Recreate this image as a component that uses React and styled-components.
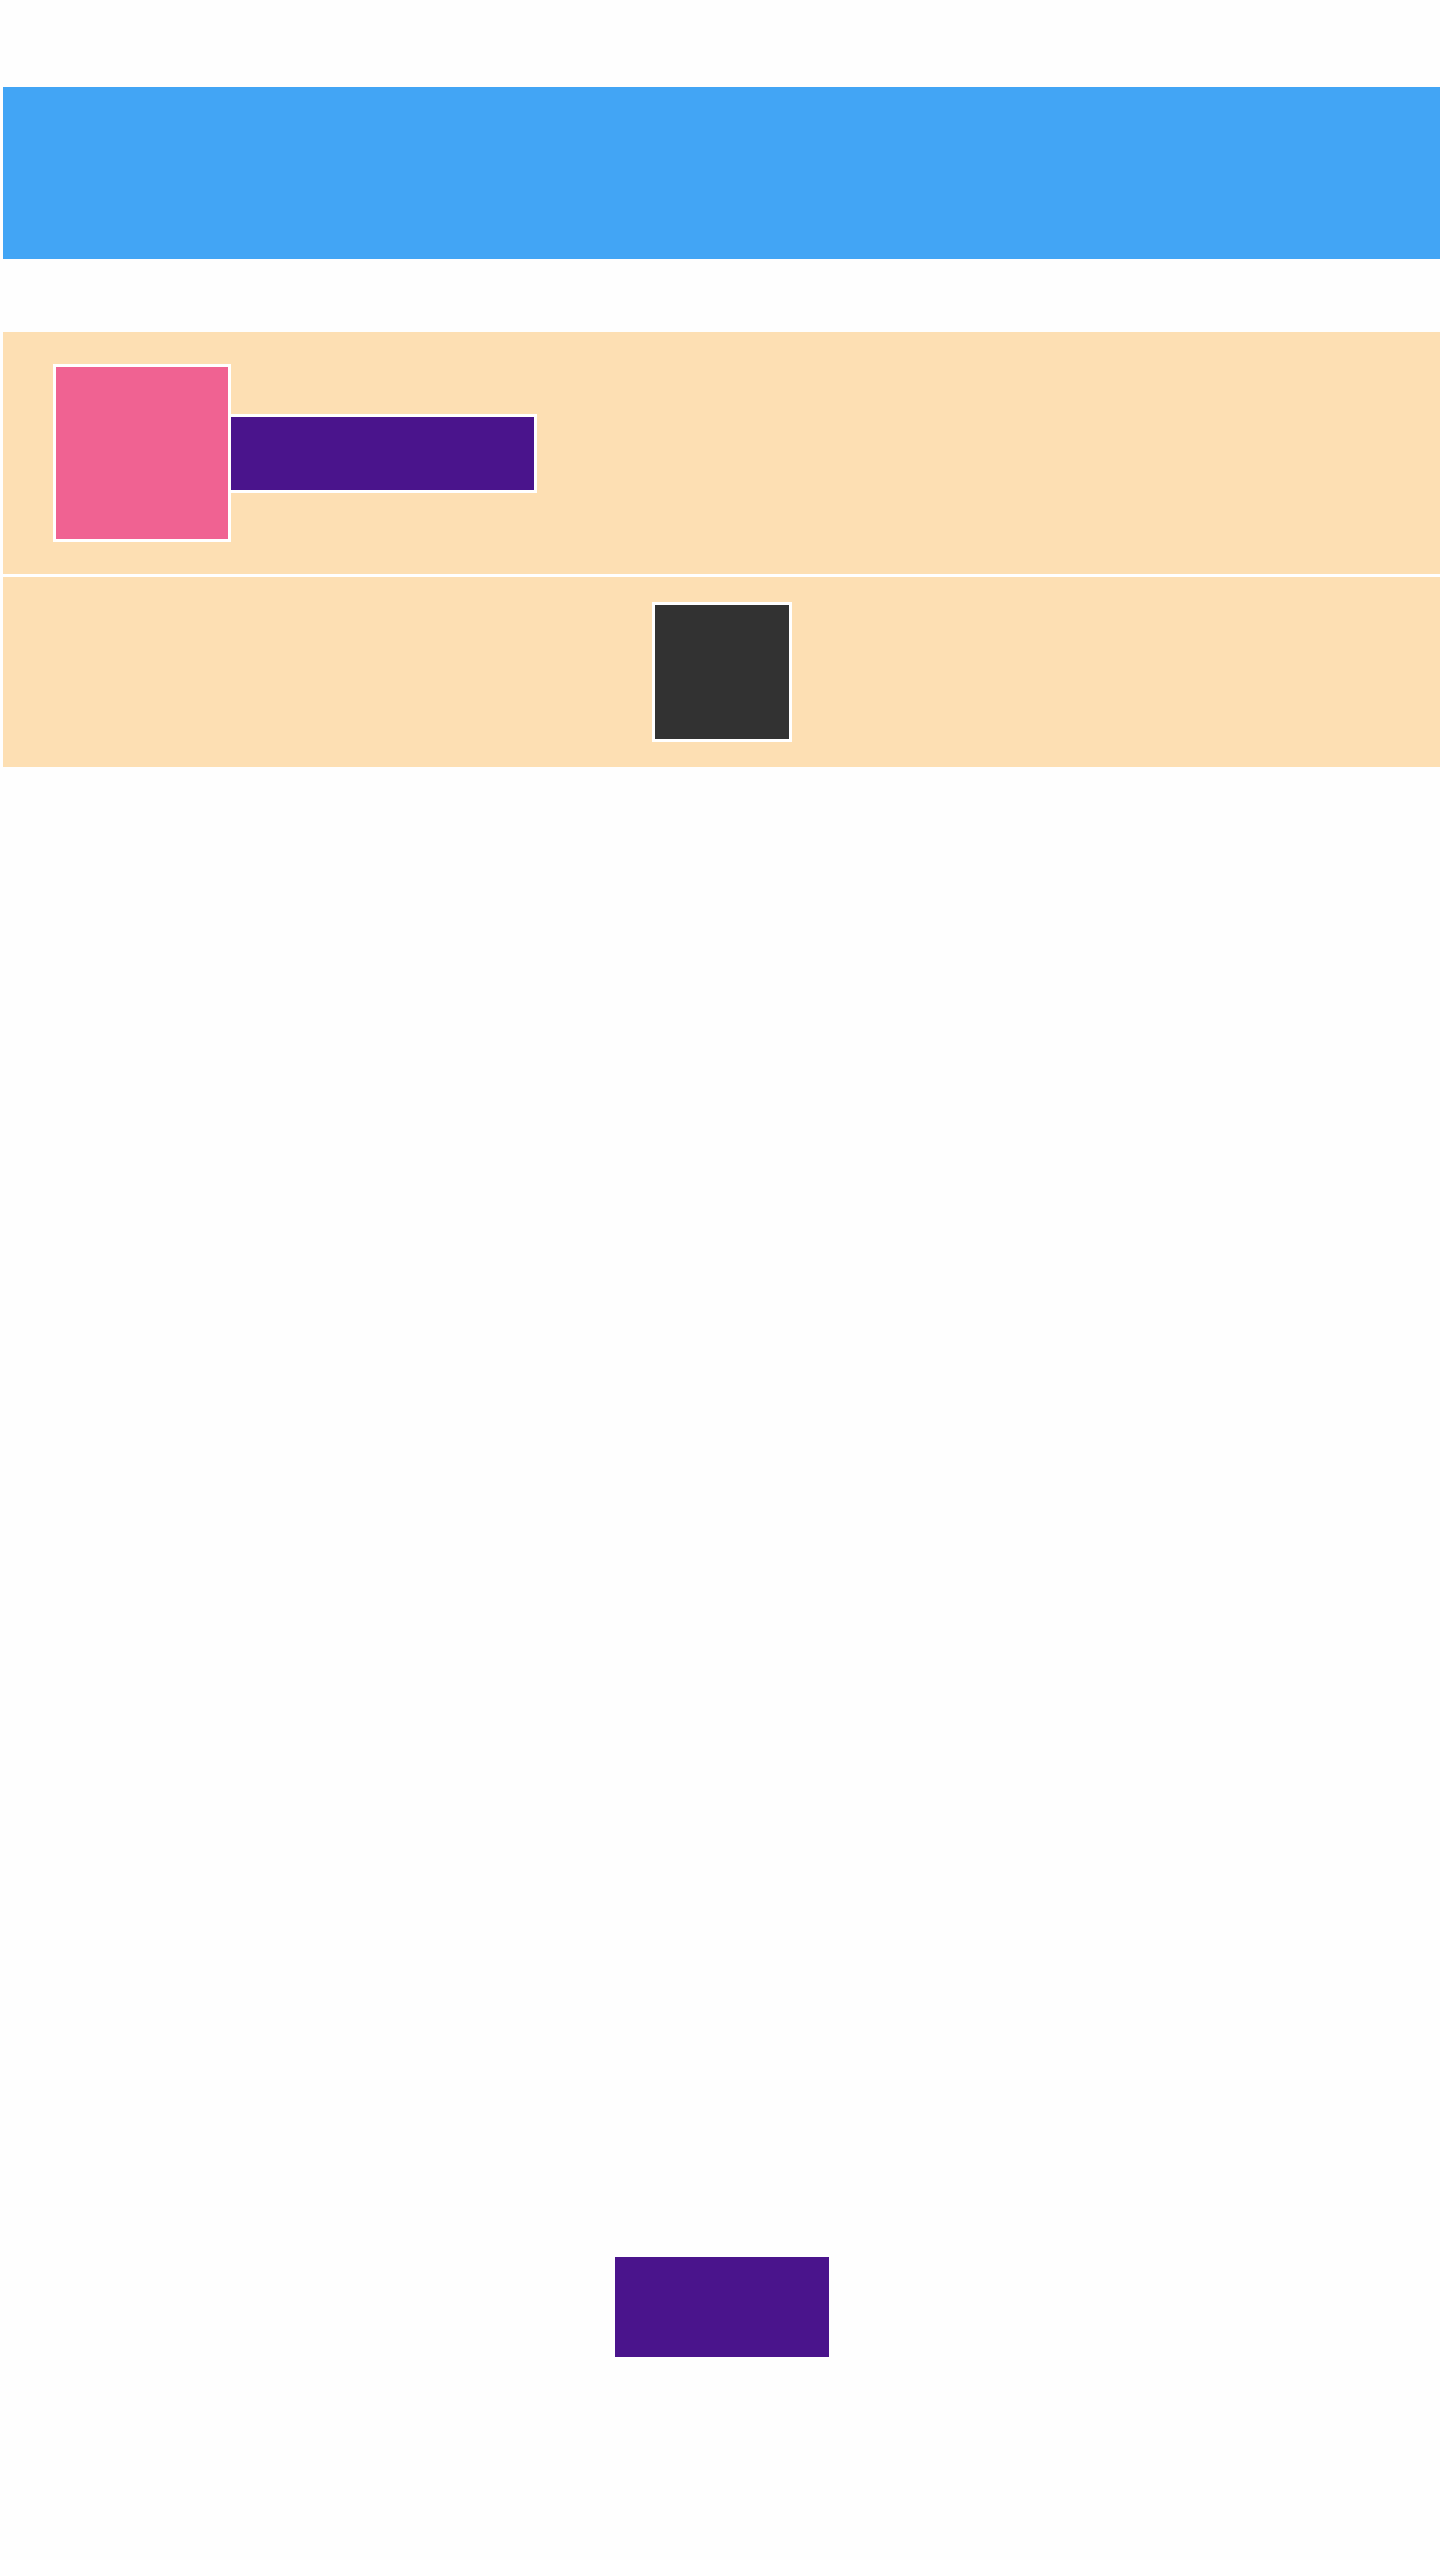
import React from "react";
import styled, { createGlobalStyle } from "styled-components";

const GlobalStyle = createGlobalStyle`
  * {
    box-sizing: border-box;
  }
  html,
  body {
    margin: 0;
    padding: 0;
    background-color: #fefefe;
    font-family: "Liberation Sans", Arial, sans-serif;
  }
`;

function App() {
  return (
    <>
      <GlobalStyle />
      <Page>
        <Header />
        <Panel>
          <TopRow>
            <Avatar />
            <TitleBar />
          </TopRow>
          <BottomRow>
            <Tile />
          </BottomRow>
        </Panel>
        <ActionButton type="button" aria-label="action" />
      </Page>
    </>
  );
}

const Page = styled.div`
  display: flex;
  flex-direction: column;
  min-height: 2560px;
  padding: 87px 0 0 3px;
  background-color: #fefefe;
`;

const Header = styled.header`
  height: 172px;
  background-color: #42a5f5;
`;

const Panel = styled.section`
  display: flex;
  flex-direction: column;
  gap: 3px;
  margin-top: 73px;
  background-color: #ffffff;
`;

const TopRow = styled.div`
  display: flex;
  align-items: center;
  height: 242px;
  padding: 0 50px;
  background-color: #fddfb3;
`;

const Avatar = styled.div`
  width: 178px;
  height: 178px;
  border: 3px solid #ffffff;
  background-color: #f06292;
`;

const TitleBar = styled.div`
  width: 306px;
  height: 79px;
  border: 3px solid #ffffff;
  border-left: none;
  background-color: #4a148c;
`;

const BottomRow = styled.div`
  display: flex;
  align-items: center;
  justify-content: center;
  height: 190px;
  background-color: #fddfb3;
`;

const Tile = styled.div`
  width: 140px;
  height: 140px;
  border: 3px solid #ffffff;
  background-color: #323232;
`;

const ActionButton = styled.button`
  align-self: center;
  width: 214px;
  height: 100px;
  margin-top: 1490px;
  border: none;
  padding: 0;
  background-color: #4a148c;
  cursor: pointer;
`;

export default App;
